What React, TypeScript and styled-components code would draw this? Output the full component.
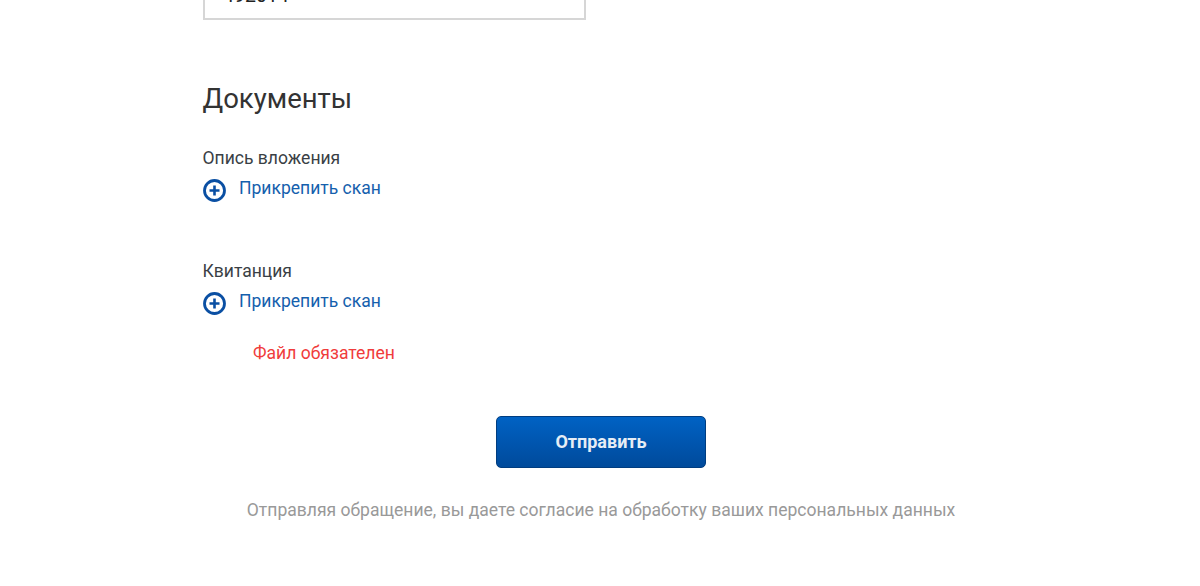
import styled, { createGlobalStyle } from "styled-components";

const GlobalStyle = createGlobalStyle`
    html, body {
        margin: 0;
        padding: 0;
        height: 586px;
        overflow: hidden;
        background: #fff;
    }
    body {
        font-family: Roboto, "Liberation Sans", sans-serif;
        color: #333;
    }
`;

const Page = styled.form`
    width: 796px;
    margin: 0 0 0 203px;
    display: flex;
    flex-direction: column;
    align-items: flex-start;
`;

const CutInput = styled.div`
    box-sizing: border-box;
    width: 383px;
    height: 20px;
    padding-left: 18px;
    border: 2px solid #d6d6d6;
    border-top: none;
    overflow: hidden;
    font-size: 19.5px;
    line-height: 18px;
    color: #222;
`;

const CutValue = styled.div`
    margin-top: -13px;
`;

const Title = styled.h2`
    margin: 62px 0 0 -0.5px;
    font-size: 27.5px;
    line-height: 34px;
    font-weight: 400;
    color: #333;
`;

const DocBlock = styled.div<{ $gap: number }>`
    margin-top: ${(p) => p.$gap}px;
    display: flex;
    flex-direction: column;
`;

const DocLabel = styled.div`
    margin-left: -0.5px;
    font-size: 17.55px;
    line-height: 20px;
    color: #3a3f45;
`;

const AttachLink = styled.a`
    margin-top: 10px;
    display: flex;
    align-items: flex-start;
    gap: 13px;
    font-size: 17.55px;
    line-height: 20px;
    color: #1560ad;
    cursor: pointer;
`;

const PlusIcon = styled.svg`
    width: 23px;
    height: 23px;
    flex: none;
    margin-top: 1px;
`;

const ErrorText = styled.div`
    margin: 28px 0 0 50px;
    font-size: 17.55px;
    line-height: 20px;
    color: #f03c3c;
`;

const SubmitButton = styled.button`
    box-sizing: border-box;
    align-self: center;
    width: 210px;
    height: 52px;
    margin: 53px 0 0;
    padding: 0 0 2px;
    border: 1px solid #003d80;
    border-radius: 5px;
    background: linear-gradient(to bottom, #0062c4, #004a9b);
    color: #e6edf5;
    font-family: inherit;
    font-size: 18px;
    font-weight: 700;
    cursor: pointer;
`;

const Consent = styled.p`
    align-self: center;
    margin: 32px 0 0;
    font-size: 17.55px;
    line-height: 20px;
    color: #999;
    white-space: nowrap;
`;

const Plus = () => (
    <PlusIcon viewBox="0 0 23 23" fill="none" stroke="#0a4fa3">
        <circle cx="11.5" cy="11.5" r="10" strokeWidth="2.8" />
        <path d="M6.5 11.5h10M11.5 6.5v10" strokeWidth="2.6" />
    </PlusIcon>
);

const App = () => {
    return (
        <>
            <GlobalStyle />
            <Page>
                <CutInput>
                    <CutValue>492014</CutValue>
                </CutInput>
                <Title>Документы</Title>
                <DocBlock $gap={32}>
                    <DocLabel>Опись вложения</DocLabel>
                    <AttachLink>
                        <Plus />
                        Прикрепить скан
                    </AttachLink>
                </DocBlock>
                <DocBlock $gap={59}>
                    <DocLabel>Квитанция</DocLabel>
                    <AttachLink>
                        <Plus />
                        Прикрепить скан
                    </AttachLink>
                </DocBlock>
                <ErrorText>Файл обязателен</ErrorText>
                <SubmitButton type="button">Отправить</SubmitButton>
                <Consent>Отправляя обращение, вы даете согласие на обработку ваших персональных данных</Consent>
            </Page>
        </>
    );
};

export default App;
